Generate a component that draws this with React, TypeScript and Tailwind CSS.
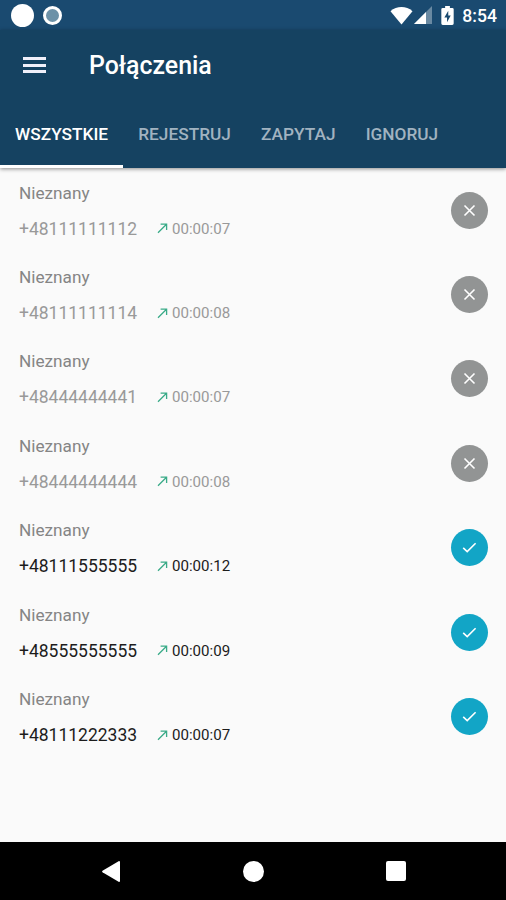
type Call = {
    number: string;
    duration: string;
    recorded: boolean;
};

const TABS = ['WSZYSTKIE', 'REJESTRUJ', 'ZAPYTAJ', 'IGNORUJ'];

const CALLS: Call[] = [
    { number: '+48111111112', duration: '00:00:07', recorded: false },
    { number: '+48111111114', duration: '00:00:08', recorded: false },
    { number: '+48444444441', duration: '00:00:07', recorded: false },
    { number: '+48444444444', duration: '00:00:08', recorded: false },
    { number: '+48111555555', duration: '00:00:12', recorded: true },
    { number: '+48555555555', duration: '00:00:09', recorded: true },
    { number: '+48111222333', duration: '00:00:07', recorded: true },
];

function StatusBar() {
    return (
        <div className="flex h-[30px] items-center justify-between bg-[#1a4a70] pr-[9px] pl-[11px]">
            <div className="flex items-center gap-[9px]">
                <span className="size-[23px] rounded-full bg-white" />
                <span className="size-[19px] rounded-full border-[3.5px] border-white bg-[#6d92a8]" />
            </div>
            <div className="flex items-center">
                {/* wifi */}
                <svg width="23" height="19" viewBox="0 0 24 19" preserveAspectRatio="none" fill="#fff">
                    <path d="M12 18.5.5 5.2C7-.4 17-.4 23.5 5.2Z" />
                </svg>
                {/* signal */}
                <svg className="ml-px" width="18" height="18" viewBox="0 0 18 18">
                    <path d="M0 18 18 0V18Z" fill="#fff" fillOpacity="0.35" />
                    <path d="M0 18 12 6V18Z" fill="#fff" />
                </svg>
                {/* battery */}
                <svg className="ml-[9px]" width="13" height="19" viewBox="0 0 13 20">
                    <path d="M4 0H9V2H11.5Q13 2 13 3.5V18.5Q13 20 11.5 20H1.5Q0 20 0 18.5V3.5Q0 2 1.5 2H4Z" fill="#fff" />
                    <path d="M7.3 5 3.2 12H6V17L9.9 10H7.3Z" fill="#1a4a70" />
                </svg>
                <span className="ml-2 pt-0.5 text-[17.6px] leading-5 font-medium text-white">8:54</span>
            </div>
        </div>
    );
}

function CallRow({ call }: { call: Call }) {
    return (
        <li className="flex h-[84.4px] items-center justify-between pr-[18px] pl-[19px]">
            <div className="flex flex-col gap-4 pt-px">
                <span className="text-[17.2px] leading-5 text-[#858585]">Nieznany</span>
                <div className={`flex items-center ${call.recorded ? 'text-[#1c1c1c]' : 'text-[#999999]'}`}>
                    <span className="w-[138px] text-[17.5px] leading-5">{call.number}</span>
                    <svg className="mr-1" width="11" height="11" viewBox="0 0 11 11" fill="none" stroke="#3aab88" strokeWidth="1.3">
                        <path d="M1 9.8 9.5 1.3M3.6 1.2H9.6V7" />
                    </svg>
                    <span className="text-[15.1px] leading-5">{call.duration}</span>
                </div>
            </div>
            <span className={`flex size-[37px] items-center justify-center rounded-full ${call.recorded ? 'bg-[#12a5c6]' : 'bg-[#929494]'}`}>
                <svg width="15" height="15" viewBox="0 0 15 15" fill="none" stroke="#fff" strokeWidth="1.6">
                    <path d={call.recorded ? 'M1.2 7.9 5.2 11.6 13.6 3.2' : 'M2.5 2.5 12.5 12.5M12.5 2.5 2.5 12.5'} />
                </svg>
            </span>
        </li>
    );
}

export default function App() {
    return (
        <div className="flex h-[900px] w-[506px] flex-col overflow-hidden bg-[#fafafa] font-[Roboto,sans-serif]">
            <StatusBar />
            <header className="h-[138px] bg-[#154261] shadow-[0_1px_4px_rgba(0,0,0,0.45)]">
                <div className="flex h-[70px] items-center pl-[23px]">
                    <button className="flex w-[23px] flex-col gap-[3.5px]" aria-label="Menu">
                        <span className="h-[3px] bg-[#f0f0fa]" />
                        <span className="h-[3px] bg-[#f0f0fa]" />
                        <span className="h-[3px] bg-[#f0f0fa]" />
                    </button>
                    <h1 className="ml-[43px] pt-px text-[24.9px] leading-8 font-medium text-white">Połączenia</h1>
                </div>
                <nav className="flex h-[68px]">
                    {TABS.map((tab, i) => (
                        <button
                            key={tab}
                            className={`flex items-center border-b-[3px] px-[15.12px] pt-0.5 text-[17.25px] leading-5 font-medium ${i === 0 ? 'border-white text-white' : 'border-transparent text-[#a1b3c0]'}`}
                        >
                            {tab}
                        </button>
                    ))}
                </nav>
            </header>
            <ul className="flex-1">
                {CALLS.map((call) => (
                    <CallRow key={call.number} call={call} />
                ))}
            </ul>
            {/* system navigation */}
            <div className="flex h-[58px] items-center justify-between bg-black pr-[100px] pl-[102px]">
                <svg width="18" height="21" viewBox="0 0 18 21" fill="#fff">
                    <path d="M17 0Q18 0 18 1V20Q18 21 17 21L.5 11.3Q-.3 10.5.5 9.7Z" />
                </svg>
                <span className="size-[21px] rounded-full bg-white" />
                <span className="size-5 rounded-xs bg-white" />
            </div>
        </div>
    );
}
